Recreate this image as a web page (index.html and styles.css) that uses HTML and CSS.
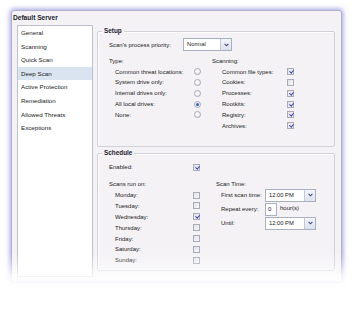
FILE: index.html
```html
<!DOCTYPE html>
<html lang="en">
<head>
    <meta charset="UTF-8">
    <title>Default Server</title>
<link rel="stylesheet" href="styles.css">
</head>
<body>
    <div class="window">
        <div class="title">Default Server</div>
        <div class="main">
            <!-- Left navigation -->
            <ul class="nav">
                <li>General</li>
                <li>Scanning</li>
                <li>Quick Scan</li>
                <li class="selected">Deep Scan</li>
                <li>Active Protection</li>
                <li>Remediation</li>
                <li>Allowed Threats</li>
                <li>Exceptions</li>
            </ul>

            <div class="content">
                <!-- Setup group -->
                <div class="group setup">
                    <div class="group-title">Setup</div>
                    <div class="priority-row">
                        <span class="priority-label">Scan's process priority:</span>
                        <div class="select select-priority">
                            <span class="select-value">Normal</span>
                            <span class="select-button"><svg width="5" height="4" viewBox="0 0 5 4"><path d="M0.6 0.8 L2.5 2.8 L4.4 0.8" fill="none" stroke="#3a4a7a" stroke-width="1.1"/></svg></span>
                        </div>
                    </div>
                    <div class="columns">
                        <div class="col col-type">
                            <div class="col-head">Type:</div>
                            <div class="opt-row"><span class="opt-label">Common threat locations:</span><span class="radio"></span></div>
                            <div class="opt-row"><span class="opt-label">System drive only:</span><span class="radio"></span></div>
                            <div class="opt-row"><span class="opt-label">Internal drives only:</span><span class="radio"></span></div>
                            <div class="opt-row"><span class="opt-label">All local drives:</span><span class="radio checked"></span></div>
                            <div class="opt-row"><span class="opt-label">None:</span><span class="radio"></span></div>
                        </div>
                        <div class="col col-scanning">
                            <div class="col-head">Scanning:</div>
                            <div class="opt-row"><span class="opt-label">Common file types:</span><span class="check checked"></span></div>
                            <div class="opt-row"><span class="opt-label">Cookies:</span><span class="check"></span></div>
                            <div class="opt-row"><span class="opt-label">Processes:</span><span class="check checked"></span></div>
                            <div class="opt-row"><span class="opt-label">Rootkits:</span><span class="check checked"></span></div>
                            <div class="opt-row"><span class="opt-label">Registry:</span><span class="check checked"></span></div>
                            <div class="opt-row"><span class="opt-label">Archives:</span><span class="check checked"></span></div>
                        </div>
                    </div>
                </div>

                <!-- Schedule group -->
                <div class="group schedule">
                    <div class="group-title">Schedule</div>
                    <div class="enabled-row"><span class="enabled-label">Enabled:</span><span class="check checked"></span></div>
                    <div class="columns">
                        <div class="col col-days">
                            <div class="col-head">Scans run on:</div>
                            <div class="day-row"><span class="day-label">Monday:</span><span class="check"></span></div>
                            <div class="day-row"><span class="day-label">Tuesday:</span><span class="check"></span></div>
                            <div class="day-row"><span class="day-label">Wednesday:</span><span class="check checked"></span></div>
                            <div class="day-row"><span class="day-label">Thursday:</span><span class="check"></span></div>
                            <div class="day-row"><span class="day-label">Friday:</span><span class="check"></span></div>
                            <div class="day-row"><span class="day-label">Saturday:</span><span class="check"></span></div>
                            <div class="day-row"><span class="day-label">Sunday:</span><span class="check"></span></div>
                        </div>
                        <div class="col col-time">
                            <div class="time-head">Scan Time:</div>
                            <div class="time-row">
                                <span class="time-label">First scan time:</span>
                                <div class="select select-time">
                                    <span class="select-value">12:00 PM</span>
                                    <span class="select-button"><svg width="5" height="4" viewBox="0 0 5 4"><path d="M0.6 0.8 L2.5 2.8 L4.4 0.8" fill="none" stroke="#3a4a7a" stroke-width="1.1"/></svg></span>
                                </div>
                            </div>
                            <div class="time-row">
                                <span class="time-label">Repeat every:</span>
                                <span class="num-input">0</span>
                                <span class="unit">hour(s)</span>
                            </div>
                            <div class="time-row">
                                <span class="time-label">Until:</span>
                                <div class="select select-time">
                                    <span class="select-value">12:00 PM</span>
                                    <span class="select-button"><svg width="5" height="4" viewBox="0 0 5 4"><path d="M0.6 0.8 L2.5 2.8 L4.4 0.8" fill="none" stroke="#3a4a7a" stroke-width="1.1"/></svg></span>
                                </div>
                            </div>
                        </div>
                    </div>
                </div>
            </div>
        </div>
        <!-- reflection fade at the bottom of the window -->
        <div class="fade"></div>
    </div>
</body>
</html>
```

FILE: styles.css
```css
html, body {
    margin: 0;
    padding: 0;
    background: #ffffff;
    overflow: hidden;
}

body {
    width: 352px;
    height: 309px;
    font-family: "Liberation Sans", Arial, sans-serif;
    font-size: 6px;
    color: #222;
}

.window {
    position: relative;
    box-sizing: border-box;
    width: 331px;
    height: 272px;
    margin: 10px 0 0 11px;
    background: #f4f2f5;
    border: 1px solid #b0b0cc;
    border-radius: 3px 3px 0 0;
    box-shadow: 0 0 5px 1px rgba(95, 95, 210, 0.6);
}

.title {
    height: 13px;
    line-height: 13px;
    padding-left: 1px;
    font-size: 6.6px;
    font-weight: bold;
    color: #222230;
}

.main {
    display: flex;
    gap: 4px;
    padding: 1px 5px 0 5px;
}

.nav {
    list-style: none;
    margin: 0;
    padding: 0;
    box-sizing: border-box;
    width: 76px;
    height: 252px;
    background: #ffffff;
    border: 1px solid #bfc2cc;
}

.nav li {
    height: 13.6px;
    line-height: 13.6px;
    padding-left: 3px;
    font-size: 6.2px;
}

.nav li.selected {
    background: #d9e4f0;
}

.content {
    width: 238px;
}

.group {
    box-sizing: border-box;
    border: 1px solid #d3d1d8;
    border-radius: 2px;
    box-shadow: inset 1px 1px 0 #ffffff;
}

.setup {
    margin-top: 6px;
    height: 116px;
}

.schedule {
    margin-top: 6px;
    height: 118px;
}

.group-title {
    display: table;
    margin: -5px 0 0 4px;
    padding: 0 2px;
    line-height: 8px;
    font-size: 6.4px;
    font-weight: bold;
    color: #222230;
    background: #f4f2f5;
}

.priority-row {
    display: flex;
    align-items: center;
    height: 13px;
    margin-top: 3px;
    padding-left: 11px;
}

.priority-label {
    width: 74px;
}

.select {
    box-sizing: border-box;
    display: flex;
    height: 13px;
    background: #ffffff;
    border: 1px solid #a9b0c2;
}

.select-priority {
    width: 49px;
}

.select-time {
    width: 51px;
}

.select-value {
    flex: 1;
    line-height: 11px;
    padding-left: 3px;
    font-size: 5.8px;
}

.select-button {
    display: flex;
    align-items: center;
    justify-content: center;
    width: 10px;
    background: linear-gradient(#f4f5fa, #dde1ee);
    border-left: 1px solid #c4c9d8;
}

.columns {
    display: flex;
    padding-left: 11px;
}

.col-type {
    width: 103px;
    margin-top: 4.5px;
}

.col-scanning {
    margin-top: 4.5px;
}

.col-head {
    line-height: 10.8px;
}

.opt-row {
    display: flex;
    align-items: center;
    height: 10.8px;
}

.col-type .opt-row {
    padding-left: 6px;
}

.col-type .opt-label {
    width: 79px;
}

.col-scanning .opt-row {
    padding-left: 10px;
}

.col-scanning .opt-label {
    width: 65px;
}

.radio {
    box-sizing: border-box;
    width: 7px;
    height: 7px;
    border-radius: 50%;
    border: 1px solid #a6a8b4;
    background: radial-gradient(circle at 40% 40%, #ffffff, #e2e3ea);
    display: flex;
    align-items: center;
    justify-content: center;
}

.radio.checked::after {
    content: "";
    width: 3px;
    height: 3px;
    border-radius: 50%;
    background: #2f5fae;
}

.check {
    box-sizing: border-box;
    width: 7px;
    height: 7px;
    border: 1px solid #a9abb8;
    background: linear-gradient(135deg, #e0e1e8, #f8f8fb);
}

.check.checked {
    position: relative;
}

.check.checked::after {
    content: "";
    position: absolute;
    left: 1.5px;
    top: 0;
    width: 1.5px;
    height: 3.2px;
    border-right: 1.2px solid #3b3fb0;
    border-bottom: 1.2px solid #3b3fb0;
    transform: rotate(40deg);
}

.enabled-row {
    display: flex;
    align-items: center;
    height: 10.8px;
    margin-top: 5px;
    padding-left: 11px;
}

.enabled-label {
    width: 84px;
}

.col-days {
    width: 107px;
    margin-top: 6px;
}

.day-row {
    display: flex;
    align-items: center;
    height: 10.9px;
    padding-left: 6px;
}

.day-label {
    width: 78px;
}

.col-time {
    margin-top: 6px;
}

.time-head {
    line-height: 9px;
    padding-top: 1px;
}

.time-row {
    display: flex;
    align-items: center;
    height: 13px;
    margin-bottom: 1px;
    padding-left: 5px;
}

.time-label {
    width: 44px;
}

.num-input {
    box-sizing: border-box;
    width: 12px;
    height: 13px;
    line-height: 11px;
    padding-left: 2px;
    background: #ffffff;
    border: 1px solid #a9b0c2;
}

.unit {
    margin-left: 3px;
    margin-top: -2px;
}

.fade {
    position: absolute;
    left: -14px;
    right: -14px;
    bottom: -16px;
    height: 44px;
    background: linear-gradient(rgba(255, 255, 255, 0) 0%, rgba(255, 255, 255, 0.3) 25%, rgba(255, 255, 255, 0.8) 50%, #ffffff 78%);
}
```
